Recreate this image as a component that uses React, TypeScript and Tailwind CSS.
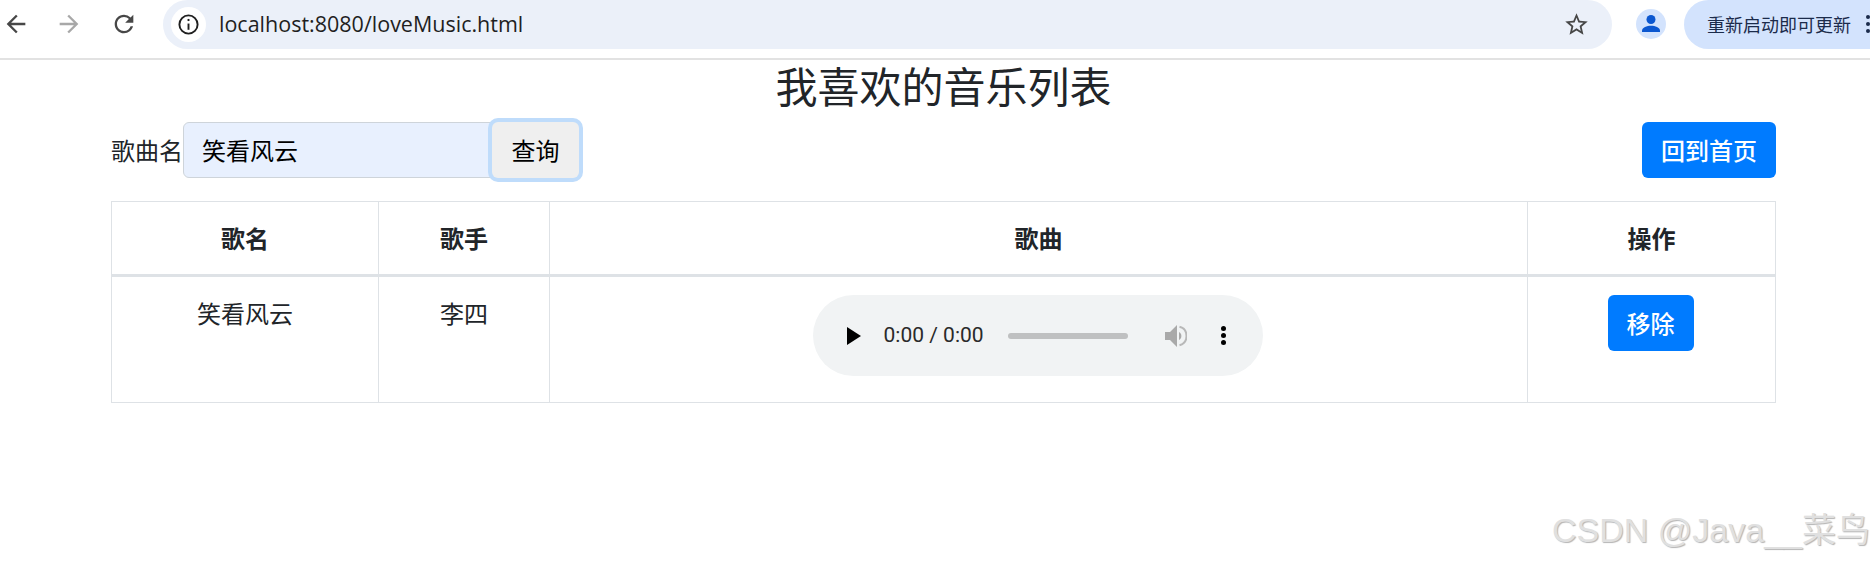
import React from 'react';

const cjk = { fontFamily: '"Noto Sans CJK SC", "Noto Sans", sans-serif' };

const Toolbar: React.FC = () => (
  <div className="h-[60px] shrink-0 flex items-start bg-white border-b-2 border-[#e2e2e2]">
    <svg viewBox="0 0 24 24" className="w-[28px] h-[28px] ml-[2px] mt-[10px] fill-[#474747]">
      <path d="M20 11H7.83l5.59-5.59L12 4l-8 8 8 8 1.41-1.41L7.83 13H20v-2z" />
    </svg>
    <svg viewBox="0 0 24 24" className="w-[28px] h-[28px] ml-[25px] mt-[10px] fill-[#a8a8a8]">
      <path d="M4 11h12.17l-5.59-5.59L12 4l8 8-8 8-1.41-1.41L16.17 13H4v-2z" />
    </svg>
    <svg viewBox="0 0 24 24" className="w-[28px] h-[28px] ml-[27px] mt-[10px] fill-[#474747]">
      <path d="M17.65 6.35A7.958 7.958 0 0012 4c-4.42 0-7.99 3.58-7.99 8s3.57 8 7.99 8c3.73 0 6.84-2.55 7.73-6h-2.08A5.99 5.99 0 0112 18c-3.31 0-6-2.69-6-6s2.69-6 6-6c1.66 0 3.14.69 4.22 1.78L13 11h7V4l-2.35 2.35z" />
    </svg>
    <div className="ml-[25px] w-[1449px] h-[49px] bg-[#ebf0f9] rounded-r-[25px] rounded-l-[25px] flex items-center pl-[8px] pr-[22px]">
      <div className="w-[35px] h-[35px] rounded-full bg-white flex items-center justify-center">
        <svg viewBox="0 0 24 24" className="w-[23px] h-[23px]" fill="none" stroke="#1f1f1f" strokeWidth="2">
          <circle cx="12" cy="12" r="9.5" />
          <path d="M12 11v6.5" />
          <path d="M12 6.2v2.2" />
        </svg>
      </div>
      <span className="ml-[13px] text-[21.5px] text-[#1f1f1f]" style={{ fontFamily: '"Open Sans", sans-serif' }}>
        localhost:8080/loveMusic.html
      </span>
      <svg viewBox="0 0 24 24" className="w-[27px] h-[27px] ml-auto fill-[#474747]">
        <path d="M22 9.24l-7.19-.62L12 2 9.19 8.63 2 9.24l5.46 4.73L5.82 21 12 17.27 18.18 21l-1.63-7.03L22 9.24zM12 15.4l-3.76 2.27 1-4.28-3.32-2.88 4.38-.38L12 6.1l1.71 4.04 4.38.38-3.32 2.88 1 4.28L12 15.4z" />
      </svg>
    </div>
    <div className="ml-[24px] mt-[9px] w-[30px] h-[30px] rounded-full bg-[#d3e3fd] flex items-center justify-center">
      <svg viewBox="0 0 24 24" className="w-[24px] h-[24px] fill-[#0b57d0]">
        <circle cx="12" cy="7.5" r="4.5" />
        <path d="M3 20v-1.5C3 15.5 8 13.8 12 13.8s9 1.7 9 4.7V20H3z" />
      </svg>
    </div>
    <div className="ml-[18px] flex-1 h-[49px] bg-[#d3e3fd] rounded-l-[25px] flex items-center pl-[23px] relative overflow-hidden">
      <span className="text-[18px] whitespace-nowrap text-[#1b2b4b]" style={cjk}>重新启动即可更新</span>
      <div className="absolute left-[182px] top-[15px] flex flex-col gap-[3px]">
        <span className="w-[4px] h-[4px] rounded-full bg-[#1b2b4b]" />
        <span className="w-[4px] h-[4px] rounded-full bg-[#1b2b4b]" />
        <span className="w-[4px] h-[4px] rounded-full bg-[#1b2b4b]" />
      </div>
    </div>
  </div>
);

const AudioPlayer: React.FC = () => (
  <div className="w-[450px] h-[81px] mx-auto rounded-[41px] bg-[#f1f3f4] flex items-center text-[#1f1f1f]">
    <svg viewBox="0 0 14 18" className="w-[14px] h-[18px] ml-[34px] fill-black">
      <path d="M0 0l14 9-14 9z" />
    </svg>
    <span className="ml-[23px] text-[21px] leading-none whitespace-nowrap text-[#2a2a2a]" style={{ fontFamily: 'Roboto, sans-serif' }}>
      0:00 / 0:00
    </span>
    <div className="ml-[24px] w-[120px] h-[6px] rounded-full bg-[#bfc0c1]" />
    <svg viewBox="0 0 22 22" className="w-[22px] h-[22px] ml-[37px]">
      <path d="M0 7h5l7-7v22l-7-7H0z" fill="#a9a9a9" />
      <path d="M14 7c1.6 1 2.4 2.4 2.4 4s-.8 3-2.4 4z" fill="#a9a9a9" />
      <path d="M14.5 1.8c4.4 1.1 7 4.7 7 9.2s-2.6 8.1-7 9.2" fill="none" stroke="#b8b8b8" strokeWidth="2" />
    </svg>
    <div className="ml-[34px] flex flex-col gap-[2px]">
      <span className="w-[5px] h-[5px] rounded-full bg-black" />
      <span className="w-[5px] h-[5px] rounded-full bg-black" />
      <span className="w-[5px] h-[5px] rounded-full bg-black" />
    </div>
  </div>
);

const App: React.FC = () => {
  const headers = ['歌名', '歌手', '歌曲', '操作'];
  return (
    <div className="h-[564px] w-full relative overflow-hidden bg-white flex flex-col" style={cjk}>
      <Toolbar />
      <div className="ml-[111px] mr-[94px] text-[#212529]">
        <h3 className="text-[42px] leading-[50px] font-normal text-center">我喜欢的音乐列表</h3>
        <div className="flex items-center mt-[12px] h-[56px] text-[24px]">
          <label className="leading-[36px] text-[#212529]">歌曲名</label>
          <input
            readOnly
            value="笑看风云"
            className="w-[309px] h-[56px] ml-0 px-[18px] pb-[2px] bg-[#e8f0fe] border border-[#ced4da] rounded-l-[6px] text-black outline-none"
          />
          <button className="w-[87px] h-[56px] bg-[#efefef] text-black rounded-[6px] ring-[4px] ring-[#bfdcfb] relative">查询</button>
          <button className="ml-auto w-[134px] h-[56px] bg-[#007bff] text-white font-medium rounded-[6px]">回到首页</button>
        </div>
        <table className="mt-[23px] w-[1664px] table-fixed border-collapse text-[24px] text-center">
          <colgroup>
            <col className="w-[267px]" />
            <col className="w-[171px]" />
            <col className="w-[978px]" />
            <col className="w-[248px]" />
          </colgroup>
          <thead>
            <tr className="h-[74px]">
              {headers.map((h) => (
                <th key={h} className="border border-[#dee2e6] border-b-[3px] font-bold align-middle">{h}</th>
              ))}
            </tr>
          </thead>
          <tbody>
            <tr className="h-[127px]">
              <td className="border border-[#dee2e6] align-top pt-[18px]">笑看风云</td>
              <td className="border border-[#dee2e6] align-top pt-[18px]">李四</td>
              <td className="border border-[#dee2e6] align-top pt-[18px] pr-[2px]"><AudioPlayer /></td>
              <td className="border border-[#dee2e6] align-top pt-[18px] pr-[2px]">
                <button className="w-[86px] h-[56px] bg-[#007bff] text-white font-medium rounded-[6px]">移除</button>
              </td>
            </tr>
          </tbody>
        </table>
      </div>
      <div className="absolute right-0 top-[508px] text-[34px] leading-[44px] whitespace-nowrap text-[#e0e0e0] [text-shadow:1px_1px_1px_#b4b4b4]" style={{ fontFamily: '"Liberation Sans", "Noto Sans CJK SC", sans-serif' }}>
        CSDN @Java__菜鸟
      </div>
    </div>
  );
};

export default App;
